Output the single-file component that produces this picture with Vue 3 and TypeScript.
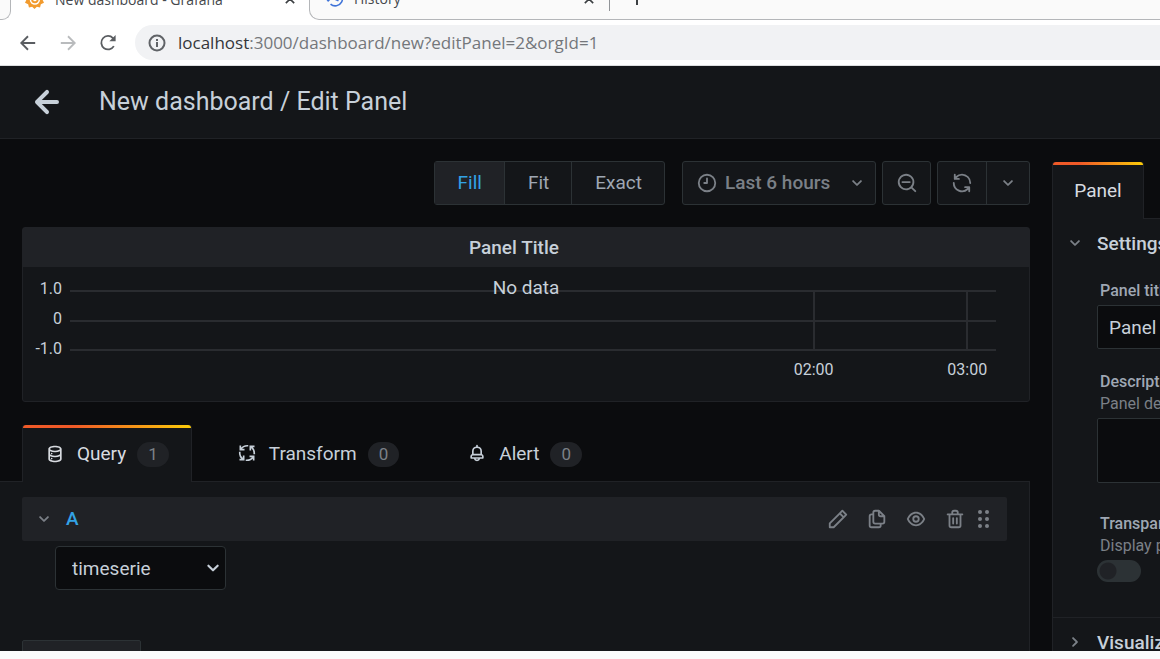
<script setup lang="ts">
import { ref } from 'vue'

const icons = {
  angle: 'M17,9.17a1,1,0,0,0-1.41,0L12,12.71,8.46,9.17a1,1,0,0,0-1.41,0,1,1,0,0,0,0,1.42l4.24,4.24a1,1,0,0,0,1.42,0L17,10.59A1,1,0,0,0,17,9.17Z',
  back: 'M17,11H9.41l3.3-3.29a1,1,0,1,0-1.42-1.42l-5,5a1,1,0,0,0-.21.33,1,1,0,0,0,0,.76,1,1,0,0,0,.21.33l5,5a1,1,0,0,0,1.42,0,1,1,0,0,0,0-1.42L9.41,13H17a1,1,0,0,0,0-2Z',
  clock: 'M12,2A10,10,0,1,0,22,12,10,10,0,0,0,12,2Zm0,18a8,8,0,1,1,8-8A8,8,0,0,1,12,20ZM12,6a1,1,0,0,0-1,1v4H9a1,1,0,0,0,0,2h3a1,1,0,0,0,1-1V7A1,1,0,0,0,12,6Z',
  zoomOut: 'M21.71,20.29,18,16.61A9,9,0,1,0,16.61,18l3.68,3.68a1,1,0,0,0,1.42,0A1,1,0,0,0,21.71,20.29ZM11,18a7,7,0,1,1,7-7A7,7,0,0,1,11,18Zm4-8H7a1,1,0,0,0,0,2h8a1,1,0,0,0,0-2Z',
  sync: 'M19.91,15.51H15.38a1,1,0,0,0,0,2h2.4A8,8,0,0,1,4,12a1,1,0,1,0-2,0,10,10,0,0,0,16.88,7.23V21a1,1,0,0,0,2,0V16.5A1,1,0,0,0,19.91,15.51ZM12,2A10,10,0,0,0,5.12,4.77V3a1,1,0,0,0-2,0V7.5a1,1,0,0,0,1,1h4.5a1,1,0,0,0,0-2H6.22A8,8,0,0,1,20,12a1,1,0,0,0,2,0A10,10,0,0,0,12,2Z',
  database: 'M8,16.5a1,1,0,1,0,1,1A1,1,0,0,0,8,16.5ZM12,2C8,2,4,3.37,4,6V18c0,2.63,4,4,8,4s8-1.37,8-4V6C20,3.37,16,2,12,2Zm6,16c0,.71-2.28,2-6,2s-6-1.29-6-2V14.73A13.16,13.16,0,0,0,12,16a13.16,13.16,0,0,0,6-1.27Zm0-6c0,.71-2.28,2-6,2s-6-1.29-6-2V8.73A13.16,13.16,0,0,0,12,10a13.16,13.16,0,0,0,6-1.27ZM12,8C8.28,8,6,6.71,6,6s2.28-2,6-2,6,1.29,6,2S15.72,8,12,8ZM8,10.5a1,1,0,1,0,1,1A1,1,0,0,0,8,10.5Z',
  bell: 'M18,13.18V10a6,6,0,0,0-5-5.91V3a1,1,0,0,0-2,0V4.09A6,6,0,0,0,6,10v3.18A3,3,0,0,0,4,16v2a1,1,0,0,0,1,1H8.14a4,4,0,0,0,7.72,0H19a1,1,0,0,0,1-1V16A3,3,0,0,0,18,13.18ZM8,10a4,4,0,0,1,8,0v3H8Zm4,10a2,2,0,0,1-1.72-1h3.44A2,2,0,0,1,12,20Zm6-3H6V16a1,1,0,0,1,1-1H17a1,1,0,0,1,1,1Z',
}

const rowActions = [
  { label: 'Edit query name', path: 'M22,7.24a1,1,0,0,0-.29-.71L17.47,2.29A1,1,0,0,0,16.76,2a1,1,0,0,0-.71.29L13.22,5.12h0L2.29,16.05a1,1,0,0,0-.29.71V21a1,1,0,0,0,1,1H7.24A1,1,0,0,0,8,21.71L18.87,10.78h0L21.71,8a1.19,1.19,0,0,0,.22-.33,1,1,0,0,0,0-.24.7.7,0,0,0,0-.14ZM6.83,20H4V17.17l9.93-9.93,2.83,2.83ZM18.17,8.66,15.34,5.83l1.42-1.41,2.82,2.82Z' },
  { label: 'Duplicate query', path: 'M21,8.94a1.31,1.31,0,0,0-.06-.27l0-.09a1.07,1.07,0,0,0-.19-.28h0l-6-6h0a1.07,1.07,0,0,0-.28-.19.32.32,0,0,0-.09,0A.88.88,0,0,0,14.05,2H10A3,3,0,0,0,7,5V6H6A3,3,0,0,0,3,9V19a3,3,0,0,0,3,3h8a3,3,0,0,0,3-3V18h1a3,3,0,0,0,3-3V9S21,9,21,8.94ZM15,5.41,17.59,8H16a1,1,0,0,1-1-1ZM15,19a1,1,0,0,1-1,1H6a1,1,0,0,1-1-1V9A1,1,0,0,1,6,8H7v7a3,3,0,0,0,3,3h5Zm4-4a1,1,0,0,1-1,1H10a1,1,0,0,1-1-1V5a1,1,0,0,1,1-1h3V7a3,3,0,0,0,3,3h3Z' },
  { label: 'Disable query', path: 'M21.92,11.6C19.9,6.91,16.1,4,12,4S4.1,6.91,2.08,11.6a1,1,0,0,0,0,.8C4.1,17.09,7.9,20,12,20s7.9-2.91,9.92-7.6A1,1,0,0,0,21.92,11.6ZM12,18c-3.17,0-6.17-2.29-7.9-6C5.83,8.29,8.83,6,12,6s6.17,2.29,7.9,6C18.17,15.71,15.17,18,12,18ZM12,8a4,4,0,1,0,4,4A4,4,0,0,0,12,8Zm0,6a2,2,0,1,1,2-2A2,2,0,0,1,12,14Z' },
  { label: 'Remove query', path: 'M10,18a1,1,0,0,0,1-1V11a1,1,0,0,0-2,0v6A1,1,0,0,0,10,18ZM20,6H16V5a3,3,0,0,0-3-3H11A3,3,0,0,0,8,5V6H4A1,1,0,0,0,4,8H5V19a3,3,0,0,0,3,3h8a3,3,0,0,0,3-3V8h1a1,1,0,0,0,0-2ZM10,5a1,1,0,0,1,1-1h2a1,1,0,0,1,1,1V6H10Zm7,14a1,1,0,0,1-1,1H8a1,1,0,0,1-1-1V8H17Zm-3-1a1,1,0,0,0,1-1V11a1,1,0,0,0-2,0v6A1,1,0,0,0,14,18Z' },
]

const fitModes = ['Fill', 'Fit', 'Exact']
const fitMode = ref('Fill')
const yTicks = ['1.0', '0', '-1.0']
const xTicks = [
  { label: '02:00', at: 80.3 },
  { label: '03:00', at: 96.9 },
]
const format = ref('timeserie')
const title = ref('Panel Title')
const description = ref('')
const transparent = ref(false)
</script>

<template>
  <div class="window">
    <header class="chrome">
      <div class="strip">
        <div class="tab-edge"></div>
        <div class="btab active">
          <svg class="fav" viewBox="0 0 24 24"><path d="M12 0l3 3 4-1 1 4 4 2-2 4 2 4-4 2-1 4-4-1-3 3-3-3-4 1-1-4-4-2 2-4-2-4 4-2 1-4 4 1z" fill="#f29b2e" /><circle cx="12.500" cy="12" r="6.500" fill="#fff" /><path d="M16 12a3.500 3.500 0 1 1-4-3.500" fill="none" stroke="#f29b2e" stroke-width="2.500" /></svg>
          <span>New dashboard - Grafana</span>
          <button class="close" aria-label="Close tab"><svg viewBox="0 0 12 12"><path d="M1 1l10 10M11 1L1 11" /></svg></button>
        </div>
        <div class="btab idle">
          <svg class="fav history" viewBox="0 0 24 24"><path d="M4 12a9 9 0 1 1 3 7M1 11l3 4 4-4M13 7v6l4 2" /></svg>
          <span>History</span>
          <button class="close" aria-label="Close tab"><svg viewBox="0 0 12 12"><path d="M1 1l10 10M11 1L1 11" /></svg></button>
          <i class="divider"></i>
          <button class="plus" aria-label="New tab"><svg viewBox="0 0 18 18"><path d="M9 1v16M1 9h16" /></svg></button>
        </div>
      </div>
      <div class="navbar">
        <button aria-label="Back"><svg viewBox="0 0 20 20" class="nav-icon"><path d="M18 10H3M10 2.500L2.500 10l7.500 7.500" /></svg></button>
        <button aria-label="Forward"><svg viewBox="0 0 20 20" class="nav-icon dim"><path d="M2 10h15M10 2.500l7.500 7.500-7.500 7.500" /></svg></button>
        <button aria-label="Reload"><svg viewBox="0 0 20 20" class="nav-icon"><path d="M16.500 13.500a7.500 7.500 0 1 1-1-9L17 6" /><path d="M18.500 1v7h-7z" class="solid" /></svg></button>
        <div class="address">
          <svg viewBox="0 0 18 18" class="info"><circle cx="9" cy="9" r="7.500" /><path d="M9 8v5M9 5v2" /></svg>
          <span><b>localhost</b>:3000/dashboard/new?editPanel=2&amp;orgId=1</span>
        </div>
      </div>
    </header>

    <div class="page">
      <div class="page-head">
        <button class="back" aria-label="Go back"><svg viewBox="0 0 24 24"><path :d="icons.back" /></svg></button>
        <h1>New dashboard / Edit Panel</h1>
      </div>

      <div class="body">
        <main class="main">
          <div class="toolbar">
            <div class="group modes">
              <button v-for="m in fitModes" :key="m" :class="{ on: m === fitMode }" @click="fitMode = m">{{ m }}</button>
            </div>
            <button class="box time">
              <svg class="icon" viewBox="0 0 24 24"><path :d="icons.clock" /></svg>
              <span>Last 6 hours</span>
              <svg class="icon" viewBox="0 0 24 24"><path :d="icons.angle" /></svg>
            </button>
            <button class="box square" aria-label="Zoom out"><svg class="icon" viewBox="0 0 24 24"><path :d="icons.zoomOut" /></svg></button>
            <div class="group refresh">
              <button aria-label="Refresh"><svg class="icon" viewBox="0 0 24 24"><path :d="icons.sync" /></svg></button>
              <button aria-label="Refresh interval"><svg class="icon" viewBox="0 0 24 24"><path :d="icons.angle" /></svg></button>
            </div>
          </div>

          <section class="panel">
            <h2>Panel Title</h2>
            <div class="chart">
              <div class="y-axis"><span v-for="y in yTicks" :key="y">{{ y }}</span></div>
              <div class="plot">
                <div class="grid-lines">
                  <i v-for="x in xTicks" :key="x.label" class="v-line" :style="{ left: x.at + '%' }"></i>
                </div>
                <span v-for="x in xTicks" :key="x.label" class="x-label" :style="{ left: x.at + '%' }">{{ x.label }}</span>
              </div>
              <span class="no-data">No data</span>
            </div>
          </section>

          <nav class="tabs">
            <button class="tab active">
              <svg class="icon" viewBox="0 0 24 24"><path :d="icons.database" /></svg>Query<span class="badge">1</span>
            </button>
            <button class="tab">
              <svg class="icon process" viewBox="0 0 24 24"><path d="M4 3v5h5M4.500 7.500C6.500 4.500 10 3 13.500 3.300M21 4h-5v5M16.500 4.500c3 2 4.500 5.500 4.200 9M20 21v-5h-5M19.500 16.500c-2 3-5.500 4.500-9 4.200M3 20h5v-5M7.500 19.500c-3-2-4.500-5.500-4.200-9" /></svg>Transform<span class="badge">0</span>
            </button>
            <button class="tab">
              <svg class="icon" viewBox="0 0 24 24"><path :d="icons.bell" /></svg>Alert<span class="badge">0</span>
            </button>
          </nav>

          <section class="queries">
            <div class="query-row">
              <button class="toggle" aria-label="Collapse query"><svg class="icon" viewBox="0 0 24 24"><path :d="icons.angle" /></svg></button>
              <strong>A</strong>
              <div class="actions">
                <button v-for="a in rowActions" :key="a.label" :aria-label="a.label"><svg class="icon" viewBox="0 0 24 24"><path :d="a.path" /></svg></button>
                <button class="drag" aria-label="Drag to reorder">
                  <svg viewBox="0 0 14 20"><circle cx="3" cy="3" r="2" /><circle cx="10" cy="3" r="2" /><circle cx="3" cy="10" r="2" /><circle cx="10" cy="10" r="2" /><circle cx="3" cy="17" r="2" /><circle cx="10" cy="17" r="2" /></svg>
                </button>
              </div>
            </div>
            <div class="select">
              <select v-model="format" aria-label="Format">
                <option>timeserie</option>
                <option>table</option>
              </select>
              <svg class="icon" viewBox="0 0 24 24"><path :d="icons.angle" /></svg>
            </div>
            <button class="add" aria-label="Add query"></button>
          </section>
        </main>

        <aside class="side">
          <div class="side-tabs"><button class="tab active">Panel</button></div>
          <div class="side-body">
            <section class="settings">
              <button class="section-head"><svg class="icon" viewBox="0 0 24 24"><path :d="icons.angle" /></svg>Settings</button>
              <div class="fields">
                <label for="panel-title">Panel title</label>
                <input id="panel-title" v-model="title" type="text" />
                <label for="panel-desc" class="second">Description<small>Panel description supports markdown and links.</small></label>
                <textarea id="panel-desc" v-model="description"></textarea>
                <label for="panel-transparent" class="third">Transparent background<small>Display panel without a background.</small></label>
                <input id="panel-transparent" v-model="transparent" type="checkbox" class="switch" />
              </div>
            </section>
            <section class="visual">
              <button class="section-head"><svg class="icon closed" viewBox="0 0 24 24"><path :d="icons.angle" /></svg>Visualization</button>
            </section>
          </div>
        </aside>
      </div>
    </div>
    <footer class="status"></footer>
  </div>
</template>

<style>
body { margin: 0; background: #fafbfb; }
</style>

<style scoped>
* { box-sizing: border-box; }
.window { display: flex; flex-direction: column; height: 100vh; overflow: hidden; font-family: Roboto, sans-serif; font-size: 19px; color: #c7d0d9; }
button { display: flex; align-items: center; justify-content: center; padding: 0; border: 0; background: none; color: inherit; font: inherit; white-space: nowrap; }
svg { display: block; flex: none; fill: currentColor; }
.icon { width: 22px; height: 22px; }

.chrome { flex: none; background: #fff; color: #45484c; font-family: "Open Sans", "Noto Sans", sans-serif; }
.strip { display: flex; align-items: flex-end; height: 20px; overflow: hidden; font-size: 14px; }
.btab { display: flex; flex: none; align-items: center; height: 42px; }
.tab-edge { flex: none; width: 11px; height: 40px; border: solid #b4b6b9; border-width: 0 1px 1px 0; border-radius: 0 0 9px 0; background: #fafafa; }
.btab.active { width: 298px; padding: 0 13px 0 14px; }
.btab.idle { flex: 1; padding: 0 15px; border: solid #b4b6b9; border-width: 0 0 1px 1px; border-radius: 0 0 0 10px; background: #fafafa; }
.fav { width: 19px; height: 19px; margin-right: 11px; }
.fav.history { margin-right: 10px; fill: none; stroke: #3f73d8; stroke-width: 2; }
.close { width: 12px; height: 12px; margin-left: auto; }
.btab.idle .close { margin-left: 182px; }
.close svg { width: 10px; height: 10px; stroke: #3c4043; stroke-width: 2; }
.divider { width: 1px; height: 24px; margin: 0 18px 0 14px; background: #919498; }
.plus { height: 100%; align-items: flex-start; padding-top: 10px; }
.plus svg { width: 18px; height: 18px; stroke: #3c4043; stroke-width: 2; }
.navbar { display: flex; align-items: center; height: 46px; padding-left: 18px; border-bottom: 1px solid #dcdedf; }
.navbar button { width: 20px; height: 20px; margin-right: 20px; }
.nav-icon { width: 18px; height: 18px; fill: none; stroke: #5a5d61; stroke-width: 2; }
.nav-icon.dim { stroke: #b9bbbd; }
.nav-icon .solid { fill: #5a5d61; stroke: none; }
.address { display: flex; flex: 1; align-items: center; height: 35px; padding-left: 13px; margin-left: -3px; border-radius: 18px 0 0 18px; background: #f1f2f4; color: #74777b; font-size: 17px; white-space: nowrap; }
.address b { color: #34363a; font-weight: 400; }
.info { width: 18px; height: 18px; margin-right: 12px; fill: none; stroke: #606367; stroke-width: 2; }

.page { display: flex; flex: 1; flex-direction: column; min-height: 0; background: #0b0c0e; }
.page-head { display: flex; flex: none; align-items: center; height: 73px; padding-left: 23px; border-bottom: 1px solid #202226; background: #141619; }
.back, .back svg { width: 48px; height: 48px; }
h1 { margin: 0 0 2px 28px; font-size: 25px; font-weight: 400; white-space: nowrap; }
.body { display: flex; flex: 1; min-height: 0; }
.main { display: flex; flex: 1; flex-direction: column; min-width: 0; }

.toolbar { display: flex; flex: none; justify-content: flex-end; height: 44px; margin-top: 22px; color: #9fa7b3; }
.group, .box { border: 1px solid #2c3235; border-radius: 3px; background: #141619; }
.group { display: flex; }
.group button + button { border-left: 1px solid #2c3235; }
.modes { margin-right: 17px; }
.modes button { padding: 0 22px 2px 23px; }
.modes .on { background: #202226; color: #33a2e5; }
.time, .square, .refresh { color: #7b8087; }
.time { width: 194px; margin-right: 6px; padding: 0 7px 0 13px; font-weight: 500; }
.time span { margin: 0 auto 0 7px; padding-bottom: 2px; }
.square { width: 49px; margin-right: 6px; }
.refresh button { width: 48px; }
.refresh button + button { width: 43px; }

.panel { display: flex; flex: none; flex-direction: column; height: 175px; margin: 22px 0 0 22px; border: 1px solid #202226; border-radius: 3px; background: #141619; }
h2 { height: 39px; margin: 0; padding-right: 24px; background: #202226; font-size: 19px; font-weight: 500; line-height: 39px; text-align: center; }
.chart { position: relative; display: flex; flex: 1; padding: 7px 33px 0 11px; font-size: 16px; }
.y-axis { display: flex; flex-direction: column; width: 28px; margin-right: 8px; line-height: 30px; text-align: right; }
.plot { position: relative; flex: 1; padding-top: 16px; }
.grid-lines { position: relative; height: 61px; border: solid #2a2c30; border-width: 2px 0; background: linear-gradient(#2a2c30, #2a2c30) center / 100% 2px no-repeat; }
.v-line { position: absolute; top: 0; bottom: 0; width: 2px; margin-left: -1px; background: #2a2c30; }
.x-label { position: absolute; top: 86px; transform: translateX(-50%); line-height: 20px; }
.no-data { position: absolute; top: 9px; left: 0; right: 0; font-size: 19px; line-height: 24px; text-align: center; }

.tabs { display: flex; flex: none; height: 57px; margin-top: 23px; }
.tabs::before { width: 22px; border-bottom: 1px solid #202226; content: ""; }
.tabs::after { flex: 1; border-bottom: 1px solid #202226; content: ""; }
.tab { padding: 0 22px; border-bottom: 1px solid #202226; }
.tab.active { position: relative; border: solid #202226; border-width: 0 1px; border-radius: 3px 3px 0 0; background: #141619; color: #d8dbe0; }
.tab.active::before { position: absolute; top: 0; left: 0; right: 0; height: 3px; border-radius: 3px 3px 0 0; background: linear-gradient(90deg, #f05a28 30%, #fbca0a 99%); content: ""; }
.tabs .tab .icon { width: 20px; height: 20px; margin-right: 12px; }
.tabs .tab + .tab { padding: 0 23px 0 45px; }
.process { fill: none; stroke: currentColor; stroke-width: 2; }
.badge { margin: 2px 0 0 11px; padding: 0 11px; border-radius: 13px; background: #202226; color: #7b8087; font-size: 17px; line-height: 25px; }

.queries { flex: 1; min-height: 0; overflow: hidden; padding: 15px 22px 0; border-right: 1px solid #202226; background: #141619; }
.query-row { display: flex; align-items: center; height: 44px; padding: 0 16px 0 11px; border-radius: 2px; background: #202226; }
.query-row strong { margin: 0 0 2px 11px; color: #33a2e5; font-weight: 500; }
.toggle, .actions { color: #7b8087; }
.actions { display: flex; gap: 17px; margin-left: auto; }
.actions .drag { margin-left: -6px; }
.drag svg { width: 14px; height: 20px; }
.select { position: relative; width: 171px; margin: 5px 0 0 33px; }
.select select { width: 100%; height: 44px; padding: 0 16px; border: 1px solid #2c3235; border-radius: 4px; background: #0b0c0e; color: #c7d0d9; font: inherit; appearance: none; }
.select .icon { position: absolute; top: 9px; right: 0; width: 26px; height: 26px; pointer-events: none; }
.add { width: 119px; height: 44px; margin-top: 50px; border: 1px solid #2c3235; border-radius: 2px; background: #202226; }

.side { display: flex; flex: 0 0 108px; flex-direction: column; margin: 23px 0 0 22px; overflow: hidden; }
.side-tabs { display: flex; flex: none; height: 57px; }
.side-tabs::after { flex: 1; border-bottom: 1px solid #202226; content: ""; }
.side-tabs .tab { width: 92px; padding: 0; }
.side-body { flex: 1; width: 420px; border-left: 1px solid #202226; background: #141619; }
.section-head { height: 48px; padding-left: 11px; font-weight: 500; }
.section-head .icon { margin-right: 11px; color: #7b8087; }
.closed { transform: rotate(-90deg); }
.settings { height: 399px; border-bottom: 1px solid #202226; }
.fields { display: flex; flex-direction: column; padding: 13px 20px 0 44px; color: #9fa7b3; font-size: 16px; }
.fields label { margin: 0 0 3px 3px; font-weight: 500; line-height: 22px; }
.fields small { display: block; color: #7b8087; font-size: 16px; font-weight: 400; }
.fields input[type="text"] { height: 44px; padding: 0 11px; }
.fields input[type="text"], textarea { border: 1px solid #2c3235; border-radius: 2px; background: #0b0c0e; color: #c7d0d9; font: inherit; font-size: 19px; }
.fields .second { margin-top: 22px; }
textarea { height: 65px; resize: none; }
.fields .third { margin-top: 30px; }
.switch { width: 44px; height: 22px; margin: 0; border-radius: 11px; background: radial-gradient(circle at 11px 11px, #202226 8px, #2c3235 9px); appearance: none; }
.status { flex: none; height: 8px; background: #fafbfb; }
</style>
